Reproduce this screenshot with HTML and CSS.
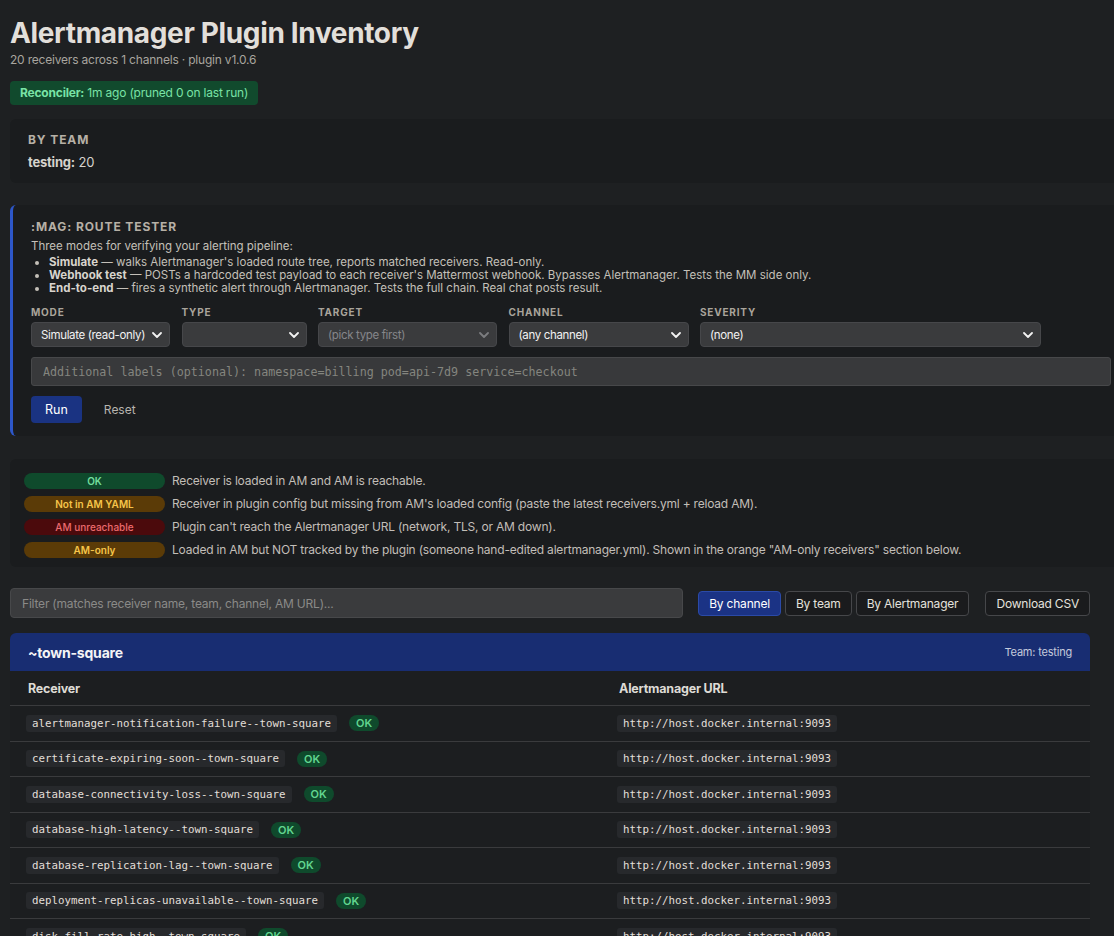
FILE: index.html
```html
<!DOCTYPE html>
<html lang="en">
<head>
    <meta charset="UTF-8">
    <meta name="viewport" content="width=device-width, initial-scale=1.0">
    <title>Alertmanager Plugin Inventory</title>
    <link rel="stylesheet" href="styles.css">
</head>
<body>
    <h1 class="title">Alertmanager Plugin Inventory</h1>
    <p class="subtitle">20 receivers across 1 channels · plugin v1.0.6</p>
    <div class="reconciler"><b>Reconciler:</b> 1m ago (pruned 0 on last run)</div>

    <section class="card by-team">
        <div class="card-title">By team</div>
        <div class="team-line"><b>testing:</b> 20</div>
    </section>

    <section class="card tester">
        <div class="card-title">:mag: Route tester</div>
        <p class="tester-intro">Three modes for verifying your alerting pipeline:</p>
        <ul class="modes">
            <li><b>Simulate</b> — walks Alertmanager's loaded route tree, reports matched receivers. Read-only.</li>
            <li><b>Webhook test</b> — POSTs a hardcoded test payload to each receiver's Mattermost webhook. Bypasses Alertmanager. Tests the MM side only.</li>
            <li><b>End-to-end</b> — fires a synthetic alert through Alertmanager. Tests the full chain. Real chat posts result.</li>
        </ul>

        <div class="fields">
            <label class="field">
                <span class="field-label">Mode</span>
                <span class="select-wrap">
                    <select><option>Simulate (read-only)</option></select>
                    <svg class="chev" viewBox="0 0 10 6"><path d="M1 1l4 4 4-4"/></svg>
                </span>
            </label>
            <label class="field">
                <span class="field-label">Type</span>
                <span class="select-wrap">
                    <select><option></option></select>
                    <svg class="chev" viewBox="0 0 10 6"><path d="M1 1l4 4 4-4"/></svg>
                </span>
            </label>
            <label class="field">
                <span class="field-label">Target</span>
                <span class="select-wrap disabled">
                    <select disabled><option>(pick type first)</option></select>
                    <svg class="chev" viewBox="0 0 10 6"><path d="M1 1l4 4 4-4"/></svg>
                </span>
            </label>
            <label class="field">
                <span class="field-label">Channel</span>
                <span class="select-wrap">
                    <select><option>(any channel)</option></select>
                    <svg class="chev" viewBox="0 0 10 6"><path d="M1 1l4 4 4-4"/></svg>
                </span>
            </label>
            <label class="field">
                <span class="field-label">Severity</span>
                <span class="select-wrap">
                    <select><option>(none)</option></select>
                    <svg class="chev" viewBox="0 0 10 6"><path d="M1 1l4 4 4-4"/></svg>
                </span>
            </label>
        </div>

        <input class="labels-input" type="text" placeholder="Additional labels (optional): namespace=billing pod=api-7d9 service=checkout">

        <div class="tester-actions">
            <button class="btn-run">Run</button>
            <button class="btn-reset">Reset</button>
        </div>
    </section>

    <section class="card legend">
        <div class="legend-row"><span class="status ok">OK</span> Receiver is loaded in AM and AM is reachable.</div>
        <div class="legend-row"><span class="status warn">Not in AM YAML</span> Receiver in plugin config but missing from AM's loaded config (paste the latest receivers.yml + reload AM).</div>
        <div class="legend-row"><span class="status err">AM unreachable</span> Plugin can't reach the Alertmanager URL (network, TLS, or AM down).</div>
        <div class="legend-row"><span class="status warn">AM-only</span> Loaded in AM but NOT tracked by the plugin (someone hand-edited alertmanager.yml). Shown in the orange "AM-only receivers" section below.</div>
    </section>

    <div class="toolbar">
        <input class="filter" type="text" placeholder="Filter (matches receiver name, team, channel, AM URL)...">
        <div class="group-btns">
            <button class="btn active">By channel</button>
            <button class="btn">By team</button>
            <button class="btn">By Alertmanager</button>
        </div>
        <button class="btn csv">Download CSV</button>
    </div>

    <section class="channel">
        <div class="channel-head">
            <span class="channel-name">~town-square</span>
            <span class="channel-team">Team: testing</span>
        </div>
        <table class="receivers">
            <thead>
                <tr><th class="col-recv">Receiver</th><th>Alertmanager URL</th></tr>
            </thead>
            <tbody>
                <tr><td><code>alertmanager-notification-failure--town-square</code><span class="pill">OK</span></td><td><code>http://host.docker.internal:9093</code></td></tr>
                <tr><td><code>certificate-expiring-soon--town-square</code><span class="pill">OK</span></td><td><code>http://host.docker.internal:9093</code></td></tr>
                <tr><td><code>database-connectivity-loss--town-square</code><span class="pill">OK</span></td><td><code>http://host.docker.internal:9093</code></td></tr>
                <tr><td><code>database-high-latency--town-square</code><span class="pill">OK</span></td><td><code>http://host.docker.internal:9093</code></td></tr>
                <tr><td><code>database-replication-lag--town-square</code><span class="pill">OK</span></td><td><code>http://host.docker.internal:9093</code></td></tr>
                <tr><td><code>deployment-replicas-unavailable--town-square</code><span class="pill">OK</span></td><td><code>http://host.docker.internal:9093</code></td></tr>
                <tr><td><code>disk-fill-rate-high--town-square</code><span class="pill">OK</span></td><td><code>http://host.docker.internal:9093</code></td></tr>
            </tbody>
        </table>
    </section>
</body>
</html>
```

FILE: styles.css
```css
html {
    overflow-x: hidden;
}

body {
    margin: 0;
    padding: 16px 24px 40px 10px;
    background-color: #1e2022;
    color: #d6d3cd;
    font-family: Inter, "Noto Sans", sans-serif;
    font-size: 12px;
    letter-spacing: -0.2px;
}

.title {
    margin: 0;
    font-size: 28px;
    line-height: 34px;
    font-weight: 700;
    color: #e2dfda;
    letter-spacing: -0.35px;
}

.subtitle {
    margin: 2px 0 0;
    font-size: 12px;
    line-height: 16px;
    color: #a8a59f;
}

.reconciler {
    display: inline-block;
    margin-top: 13px;
    padding: 5px 10px;
    line-height: 14px;
    background-color: #114a2d;
    color: #79e3a6;
    border-radius: 4px;
}

/* cards run past the right edge, like the original */
.card {
    width: 100%;
    padding: 13px 18px 12px;
    background-color: #1a1c1e;
    border-radius: 6px;
}

.card-title {
    font-size: 12px;
    line-height: 16px;
    font-weight: 700;
    letter-spacing: 0.9px;
    text-transform: uppercase;
    color: #b6b0a6;
}

.by-team {
    margin-top: 14px;
}

.team-line {
    margin-top: 6px;
    font-size: 13px;
    line-height: 17px;
}

.tester {
    margin-top: 22px;
    padding: 14px 18px 13px 18px;
    border-left: 3px solid #2d57c9;
}

.tester-intro {
    margin: 4px 0 0;
    font-size: 11.5px;
    line-height: 15px;
    letter-spacing: 0;
    color: #c4c0b9;
}

.modes {
    margin: 2px 0 0;
    padding-left: 18px;
    font-size: 11.5px;
    line-height: 13px;
    letter-spacing: 0;
    color: #c4c0b9;
}

.modes b {
    color: #d8d4cd;
}

.fields {
    display: grid;
    grid-template-columns: 139px 125px 179px 180px 341px;
    column-gap: 11.5px;
    margin-top: 11px;
}

.field {
    display: flex;
    flex-direction: column;
}

.field-label {
    font-size: 10px;
    line-height: 12px;
    font-weight: 700;
    letter-spacing: 0.8px;
    text-transform: uppercase;
    color: #a9a49b;
    margin-bottom: 4px;
}

.select-wrap {
    position: relative;
    display: block;
}

.select-wrap select {
    appearance: none;
    -webkit-appearance: none;
    width: 100%;
    height: 25px;
    padding: 0 18px 0 9px;
    background-color: #3a3b3d;
    border: 1px solid #46474a;
    border-radius: 4px;
    color: #f2f2f2;
    font-family: Inter, "Noto Sans", sans-serif;
    font-size: 11.5px;
    letter-spacing: -0.35px;
}

.select-wrap.disabled select {
    color: #85868a;
    opacity: 1;
}

.chev {
    position: absolute;
    right: 8px;
    top: 10px;
    width: 10px;
    height: 6px;
    fill: none;
    stroke: #f2f2f2;
    stroke-width: 1.8;
    stroke-linecap: round;
    stroke-linejoin: round;
    pointer-events: none;
}

.disabled .chev {
    stroke: #7c7d80;
}

.labels-input {
    display: block;
    box-sizing: border-box;
    width: 100%;
    height: 29px;
    margin-top: 10px;
    padding: 0 11px;
    background-color: #38393b;
    border: 1px solid #47484a;
    border-radius: 3px;
    color: #e0e0e0;
    font-family: "DejaVu Sans Mono", monospace;
    font-size: 11.7px;
    letter-spacing: 0;
}

.labels-input::placeholder {
    color: #84857f;
}

.tester-actions {
    display: flex;
    align-items: center;
    gap: 10px;
    margin-top: 10px;
}

.btn-run {
    height: 27px;
    padding: 0 14px;
    background-color: #1a3382;
    border: none;
    border-radius: 4px;
    color: #fff;
    font-family: Inter, "Noto Sans", sans-serif;
    font-size: 12.5px;
}

.btn-reset {
    height: 27px;
    padding: 0 12px;
    background: none;
    border: none;
    color: #b8b4ae;
    font-family: Inter, "Noto Sans", sans-serif;
    font-size: 12px;
}

.legend {
    margin-top: 23px;
    padding: 14px 14px 9px;
}

.legend-row {
    display: flex;
    align-items: center;
    gap: 7px;
    margin-bottom: 7px;
    line-height: 16px;
    color: #c2beb8;
}

.legend-row:last-child {
    margin-bottom: 0;
}

.status {
    flex: 0 0 141px;
    height: 16px;
    border-radius: 8px;
    text-align: center;
    font-size: 10px;
    line-height: 16px;
    font-weight: 600;
    letter-spacing: 0;
}

.status.ok {
    background-color: #0f4a2c;
    color: #72dd9d;
}

.status.warn {
    background-color: #5b3b07;
    color: #f6c54a;
}

.status.err {
    background-color: #4b0a0c;
    color: #ec6b6e;
    font-weight: 500;
}

.toolbar {
    display: flex;
    align-items: center;
    margin-top: 21px;
}

.filter {
    flex: 1;
    box-sizing: border-box;
    height: 30px;
    padding: 0 11px;
    background-color: #3a3b3d;
    border: 1px solid #47484a;
    border-radius: 4px;
    color: #e0e0e0;
    font-family: Inter, "Noto Sans", sans-serif;
    font-size: 12px;
    letter-spacing: -0.2px;
}

.filter::placeholder {
    color: #8a8a88;
}

.group-btns {
    display: flex;
    gap: 4px;
    margin-left: 15px;
}

.btn {
    height: 25px;
    padding: 0 10px;
    background-color: #1a1b1d;
    border: 1px solid #46474a;
    border-radius: 4px;
    color: #e4e2de;
    font-family: Inter, "Noto Sans", sans-serif;
    font-size: 12px;
    letter-spacing: -0.2px;
}

.btn.active {
    background-color: #1b3385;
    border-color: #2b4aa8;
    color: #fff;
}

.csv {
    margin-left: 16px;
}

.channel {
    margin-top: 15px;
    background-color: #1c1e20;
    border-radius: 6px 6px 0 0;
}

.channel-head {
    display: flex;
    justify-content: space-between;
    align-items: center;
    height: 38px;
    padding: 0 18px;
    background-color: #182d72;
    border-radius: 6px 6px 0 0;
}

.channel-name {
    font-size: 14px;
    font-weight: 700;
    color: #f4f4f6;
}

.channel-team {
    font-size: 11px;
    color: #c4cadc;
}

.receivers {
    width: 100%;
    border-collapse: collapse;
}

.receivers th {
    height: 34px;
    padding: 0 18px;
    text-align: left;
    font-size: 12.5px;
    font-weight: 700;
    color: #dedbd5;
    border-bottom: 1px solid #3a3b3d;
}

.receivers .col-recv {
    width: 555px;
}

.receivers td {
    height: 34.5px;
    padding: 0 16px;
    border-bottom: 1px solid #3a3b3d;
}

.receivers code {
    display: inline-block;
    padding: 2px 6px;
    background-color: #27292c;
    border-radius: 3px;
    color: #e2dfd8;
    font-family: "DejaVu Sans Mono", monospace;
    font-size: 10.8px;
    line-height: 13px;
    letter-spacing: 0;
    vertical-align: middle;
}

.pill {
    display: inline-block;
    margin-left: 12px;
    padding: 0 7px;
    background-color: #0f4a2c;
    border-radius: 8px;
    color: #62d690;
    font-size: 11px;
    font-weight: 600;
    line-height: 16px;
    letter-spacing: 0;
    vertical-align: middle;
}
```
